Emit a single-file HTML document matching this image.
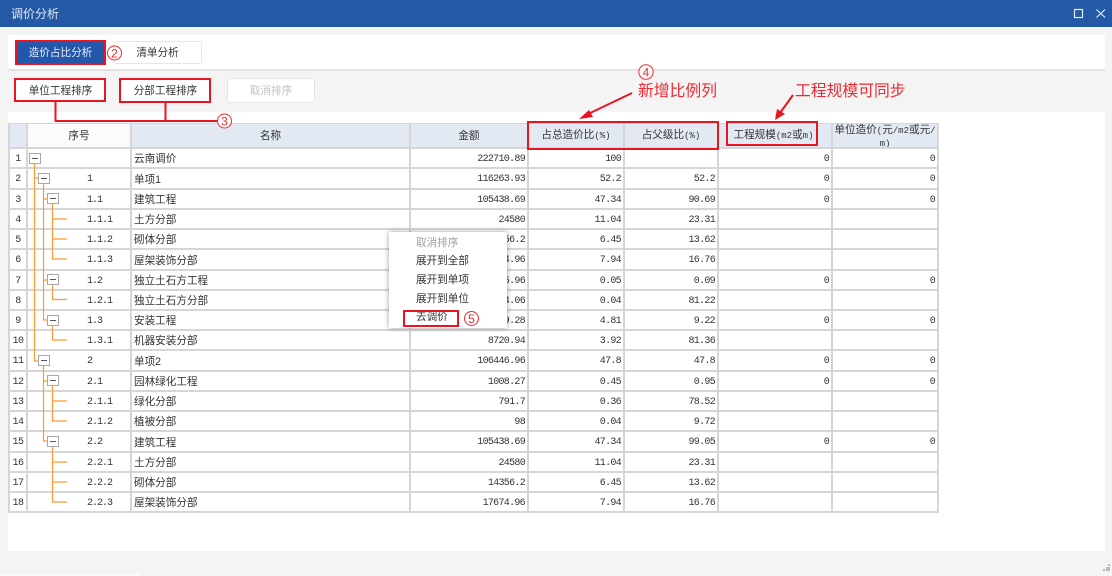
<!DOCTYPE html>
<html lang="zh">
<head>
<meta charset="utf-8">
<title>调价分析</title>
<style>
html,body{margin:0;padding:0;width:1112px;height:576px;overflow:hidden;background:#f4f4f4}
body{position:relative;font-family:"Liberation Sans","Noto Sans CJK SC",sans-serif;font-size:10.6px;color:#333;filter:blur(.3px)}
.a{position:absolute;box-sizing:border-box}
#title{left:0;top:0;width:1112px;height:27px;background:#2459a5;color:#dfe8f4;font-size:12px;line-height:29px;padding-left:11px}
#tabs{left:8px;top:35px;width:1097px;height:34px;background:#fff}
#sep{left:8px;top:69px;width:1097px;height:2px;background:#e2e2e4}
#panel{left:8px;top:112px;width:1097px;height:439px;background:#fff}
.btn{text-align:center;border-radius:3px;background:#fff;border:1px solid #e6e6e6}
table{position:absolute;left:8px;top:123px;border-collapse:separate;border-spacing:0;table-layout:fixed;width:930px;border-left:2px solid #d6d6d6;border-top:1px solid #d6d6d6;box-sizing:border-box}
td,th{box-sizing:border-box;border-right:2px solid #d6d6d6;border-bottom:2px solid #d6d6d6;padding:0;overflow:hidden;font-weight:normal;white-space:nowrap;height:20px;line-height:14px;font-size:10.6px}
th{background:#e3e9f2;text-align:center;height:25px}
th.w{background:#fbfbfb}
tr.t td{height:21px}
td.n{font-family:"Liberation Mono",monospace;font-size:10px;text-align:center;letter-spacing:-.5px;padding-top:3px}
td.s{font-family:"Liberation Mono",monospace;font-size:10px;padding-left:59px;letter-spacing:-1px;padding-top:3px}
td.m{padding-left:2px;padding-top:2px}
td.r{font-family:"Liberation Mono",monospace;font-size:10px;text-align:right;padding-right:2px;letter-spacing:-.7px;padding-top:3px}
.p{font-family:"Liberation Mono",monospace;font-size:9px}
#menu{left:389px;top:232px;width:118px;height:96px;background:#fff;box-shadow:0 0 5px rgba(0,0,0,.4)}
#menu div{position:absolute;left:27px;line-height:14px;white-space:nowrap}
svg{position:absolute;left:0;top:0}
.red{border:2px solid #e8141f}
.ann{color:#ee2a33;font-size:15.8px;line-height:20px;white-space:nowrap}
</style>
</head>
<body>
<div class="a" id="title">调价分析</div>
<div class="a" id="tabs"></div>
<div class="a" id="sep"></div>
<div class="a" id="panel"></div>

<div class="a" style="left:16px;top:41px;width:89px;height:23px;background:#2257ab;color:#e8effa;text-align:center;line-height:25px">造价占比分析</div>
<div class="a btn" style="left:113px;top:41px;width:89px;height:23px;line-height:23px">清单分析</div>
<div class="a btn" style="left:16px;top:79px;width:89px;height:22px;line-height:24px;border:0">单位工程排序</div>
<div class="a btn" style="left:121px;top:80px;width:89px;height:22px;line-height:23px;border:0">分部工程排序</div>
<div class="a btn" style="left:227px;top:78px;width:88px;height:25px;line-height:25px;color:#c2c2c2">取消排序</div>

<table>
<colgroup><col style="width:18px"><col style="width:104px"><col style="width:279px"><col style="width:118px"><col style="width:96px"><col style="width:94px"><col style="width:114px"><col style="width:106px"></colgroup>
<tr><th></th><th class="w">序号</th><th>名称</th><th>金额</th><th>占总造价比<span class="p">(%)</span></th><th>占父级比<span class="p">(%)</span></th><th style="padding-right:3px">工程规模<span class="p">(m2</span>或<span class="p">m)</span></th><th><div style="height:23px;line-height:12px">单位造价<span class="p">(</span>元<span class="p">/m2</span>或元<span class="p">/</span><br><span class="p">m)</span></div></th></tr>
<tr><td class="n">1</td><td class="s"></td><td class="m">云南调价</td><td class="r">222710.89</td><td class="r">100</td><td class="r"></td><td class="r">0</td><td class="r">0</td></tr>
<tr class="t"><td class="n">2</td><td class="s">1</td><td class="m">单项1</td><td class="r">116263.93</td><td class="r">52.2</td><td class="r">52.2</td><td class="r">0</td><td class="r">0</td></tr>
<tr><td class="n">3</td><td class="s">1.1</td><td class="m">建筑工程</td><td class="r">105438.69</td><td class="r">47.34</td><td class="r">90.69</td><td class="r">0</td><td class="r">0</td></tr>
<tr><td class="n">4</td><td class="s">1.1.1</td><td class="m">土方分部</td><td class="r">24580</td><td class="r">11.04</td><td class="r">23.31</td><td class="r"></td><td class="r"></td></tr>
<tr><td class="n">5</td><td class="s">1.1.2</td><td class="m">砌体分部</td><td class="r">14356.2</td><td class="r">6.45</td><td class="r">13.62</td><td class="r"></td><td class="r"></td></tr>
<tr class="t"><td class="n">6</td><td class="s">1.1.3</td><td class="m">屋架装饰分部</td><td class="r">17674.96</td><td class="r">7.94</td><td class="r">16.76</td><td class="r"></td><td class="r"></td></tr>
<tr><td class="n">7</td><td class="s">1.2</td><td class="m">独立土石方工程</td><td class="r">115.96</td><td class="r">0.05</td><td class="r">0.09</td><td class="r">0</td><td class="r">0</td></tr>
<tr><td class="n">8</td><td class="s">1.2.1</td><td class="m">独立土石方分部</td><td class="r">94.06</td><td class="r">0.04</td><td class="r">81.22</td><td class="r"></td><td class="r"></td></tr>
<tr><td class="n">9</td><td class="s">1.3</td><td class="m">安装工程</td><td class="r">10719.28</td><td class="r">4.81</td><td class="r">9.22</td><td class="r">0</td><td class="r">0</td></tr>
<tr><td class="n">10</td><td class="s">1.3.1</td><td class="m">机器安装分部</td><td class="r">8720.94</td><td class="r">3.92</td><td class="r">81.36</td><td class="r"></td><td class="r"></td></tr>
<tr class="t"><td class="n">11</td><td class="s">2</td><td class="m">单项2</td><td class="r">106446.96</td><td class="r">47.8</td><td class="r">47.8</td><td class="r">0</td><td class="r">0</td></tr>
<tr><td class="n">12</td><td class="s">2.1</td><td class="m">园林绿化工程</td><td class="r">1008.27</td><td class="r">0.45</td><td class="r">0.95</td><td class="r">0</td><td class="r">0</td></tr>
<tr><td class="n">13</td><td class="s">2.1.1</td><td class="m">绿化分部</td><td class="r">791.7</td><td class="r">0.36</td><td class="r">78.52</td><td class="r"></td><td class="r"></td></tr>
<tr><td class="n">14</td><td class="s">2.1.2</td><td class="m">植被分部</td><td class="r">98</td><td class="r">0.04</td><td class="r">9.72</td><td class="r"></td><td class="r"></td></tr>
<tr class="t"><td class="n">15</td><td class="s">2.2</td><td class="m">建筑工程</td><td class="r">105438.69</td><td class="r">47.34</td><td class="r">99.05</td><td class="r">0</td><td class="r">0</td></tr>
<tr><td class="n">16</td><td class="s">2.2.1</td><td class="m">土方分部</td><td class="r">24580</td><td class="r">11.04</td><td class="r">23.31</td><td class="r"></td><td class="r"></td></tr>
<tr><td class="n">17</td><td class="s">2.2.2</td><td class="m">砌体分部</td><td class="r">14356.2</td><td class="r">6.45</td><td class="r">13.62</td><td class="r"></td><td class="r"></td></tr>
<tr><td class="n">18</td><td class="s">2.2.3</td><td class="m">屋架装饰分部</td><td class="r">17674.96</td><td class="r">7.94</td><td class="r">16.76</td><td class="r"></td><td class="r"></td></tr>
</table>

<svg width="1112" height="576" viewBox="0 0 1112 576">
<!-- window icons -->
<g fill="none" stroke="#e4ecf7" stroke-width="1.2">
<rect x="1074.5" y="9.5" width="8" height="8"/>
<path d="M1096.5 9.5 L1105 17.5 M1105 9.5 L1096.5 17.5"/>
</g>
<!-- tree lines -->
<g fill="none" stroke="#ff9a33" stroke-width="1.2">
<path d="M34.5 164 V361 H38"/>
<path d="M34.5 178 H38"/>
<path d="M43.5 184 V320 H47 M43.5 199 H47 M43.5 280 H47"/>
<path d="M43.5 366 V441 H47 M43.5 381 H47"/>
<path d="M52.5 204 V259 H67 M52.5 219 H67 M52.5 239 H67"/>
<path d="M52.5 285 V299.5 H67"/>
<path d="M52.5 325 V340 H67"/>
<path d="M52.5 386 V421 H67 M52.5 401 H67"/>
<path d="M52.5 446 V502 H67 M52.5 462 H67 M52.5 482 H67"/>
</g>
<!-- expand boxes -->
<g fill="#fff" stroke="#a8a8a8" stroke-width="1">
<rect x="29.5" y="153.5" width="11" height="10"/>
<rect x="38.5" y="173.5" width="11" height="10"/>
<rect x="47.5" y="193.5" width="11" height="10"/>
<rect x="47.5" y="274.5" width="11" height="10"/>
<rect x="47.5" y="315.5" width="11" height="10"/>
<rect x="38.5" y="355.5" width="11" height="10"/>
<rect x="47.5" y="375.5" width="11" height="10"/>
<rect x="47.5" y="436.5" width="11" height="10"/>
</g>
<g stroke="#555" stroke-width="1">
<path d="M32 158.5 H38 M41 178.5 H47 M50 198.5 H56 M50 279.5 H56 M50 320.5 H56 M41 360.5 H47 M50 380.5 H56 M50 441.5 H56"/>
</g>
</svg>

<div class="a" id="menu">
<div style="top:4px;color:#a0a0a0">取消排序</div>
<div style="top:22px">展开到全部</div>
<div style="top:41px">展开到单项</div>
<div style="top:60px">展开到单位</div>
<div style="top:78px">去调价</div>
</div>

<!-- red annotation boxes -->
<div class="a red" style="left:15px;top:40px;width:91px;height:25px"></div>
<div class="a red" style="left:14px;top:78px;width:92px;height:24px"></div>
<div class="a red" style="left:119px;top:78px;width:92px;height:25px"></div>
<div class="a red" style="left:527px;top:121px;width:192px;height:29px"></div>
<div class="a red" style="left:726px;top:121px;width:92px;height:25px"></div>
<div class="a red" style="left:403px;top:310px;width:56px;height:17px"></div>

<svg width="1112" height="576" viewBox="0 0 1112 576">
<g fill="none" stroke="#e8141f" stroke-width="2">
<path d="M55.5 102 V121 H217 M165.5 102 V121"/>
<path d="M632 93 L586 115"/>
<path d="M793 95 L780 113"/>
</g>
<path d="M579 119 L589 110 L593 117 Z" fill="#e8141f"/>
<path d="M775 120 L777 109 L785 114 Z" fill="#e8141f"/>
<g fill="#fff" stroke="#ee2a33" stroke-width="1">
<circle cx="114.5" cy="53" r="7"/>
<circle cx="224.5" cy="121" r="7"/>
<circle cx="646" cy="72" r="7.2"/>
<circle cx="471.5" cy="318.5" r="7"/>
</g>
<g fill="#ee2a33" font-family="'Liberation Sans',sans-serif" font-size="12" text-anchor="middle">
<text x="114.5" y="57.3">2</text>
<text x="224.5" y="125.3">3</text>
<text x="646" y="76.3">4</text>
<text x="471.5" y="322.8">5</text>
</g>
<g fill="#b9b9b9">
<rect x="1108" y="564" width="2" height="2"/>
<rect x="1106" y="567" width="2" height="2"/><rect x="1108" y="567" width="2" height="2"/>
<rect x="1103" y="569" width="2" height="2"/><rect x="1106" y="569" width="2" height="2"/><rect x="1108" y="569" width="2" height="2"/>
</g>
</svg>

<div class="a ann" style="left:638px;top:82px">新增比例列</div>
<div class="a ann" style="left:795px;top:82px">工程规模可同步</div>

<div class="a" style="left:0;top:574px;width:140px;height:2px;background:#fbfbfb"></div>
</body>
</html>
